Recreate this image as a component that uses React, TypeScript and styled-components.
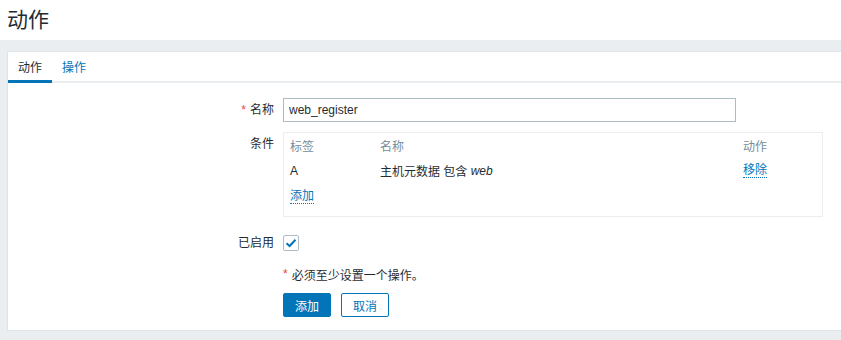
import React from "react";
import styled, { createGlobalStyle } from "styled-components";

const colors = {
  text: "#1f2c33",
  muted: "#768d99",
  blue: "#0275b8",
  bg: "#ebeef0",
  border: "#dfe4e7",
  inputBorder: "#acbbc4",
  red: "#e54545",
};

const GlobalStyle = createGlobalStyle`
  html, body {
    margin: 0;
    padding: 0;
    background: ${colors.bg};
    overflow: hidden;
  }
  body {
    font-family: "Liberation Sans", Arial, "Noto Sans CJK SC", sans-serif;
    font-size: 12px;
    color: ${colors.text};
  }
`;

const conditions = [{ label: "A", name: "主机元数据 包含", value: "web" }];

export default function App() {
  return (
    <>
      <GlobalStyle />
      <Header>
        <Title>动作</Title>
      </Header>
      <Main>
        <Panel>
          <TabBar>
            <Tab $active>动作</Tab>
            <Tab>操作</Tab>
          </TabBar>
          <Form>
            <Label>
              <Required>*</Required>名称
            </Label>
            <Field>
              <TextInput defaultValue="web_register" />
            </Field>

            <Label>条件</Label>
            <Field>
              <ConditionBox>
                <CondHead>标签</CondHead>
                <CondHead>名称</CondHead>
                <CondHead>动作</CondHead>
                {conditions.map((c) => (
                  <React.Fragment key={c.label}>
                    <CondCell>{c.label}</CondCell>
                    <CondCell>
                      {c.name} <em>{c.value}</em>
                    </CondCell>
                    <CondCell>
                      <Link>移除</Link>
                    </CondCell>
                  </React.Fragment>
                ))}
                <CondCell>
                  <Link>添加</Link>
                </CondCell>
              </ConditionBox>
            </Field>

            <Label $shift>已启用</Label>
            <Field $shift>
              <Checkbox>
                <svg width="12" height="10" viewBox="0 0 12 10">
                  <path
                    d="M1.5 5.2 L4.6 8 L10.5 1.8"
                    fill="none"
                    stroke={colors.blue}
                    strokeWidth="2"
                  />
                </svg>
              </Checkbox>
            </Field>

            <span />
            <Message>
              <Required>*</Required>必须至少设置一个操作。
            </Message>

            <span />
            <Buttons>
              <Button $primary>添加</Button>
              <Button>取消</Button>
            </Buttons>
          </Form>
        </Panel>
      </Main>
    </>
  );
}

//******** STYLES ********//
const Header = styled.header`
  height: 40px;
  background: #fff;
  display: flex;
  align-items: center;
  padding: 0 0 4px 7px;
  box-sizing: border-box;
`;

const Title = styled.h1`
  margin: 0;
  font-size: 21px;
  font-weight: normal;
  color: ${colors.text};
`;

const Main = styled.main`
  padding: 11px 0 9px 7px;
`;

const Panel = styled.section`
  background: #fff;
  border: 1px solid ${colors.border};
  margin-right: -4px;
  height: 280px;
  box-sizing: border-box;
`;

const TabBar = styled.div`
  display: flex;
  height: 29px;
  border-bottom: 2px solid ${colors.bg};
  box-sizing: content-box;
`;

const Tab = styled.div<{ $active?: boolean }>`
  display: flex;
  align-items: center;
  padding: 0 10px;
  color: ${(p) => (p.$active ? colors.text : colors.blue)};
  border-bottom: 3px solid ${(p) => (p.$active ? colors.blue : "transparent")};
  margin-bottom: -2px;
`;

const Form = styled.div`
  display: grid;
  grid-template-columns: 266px 1fr;
  column-gap: 9px;
  row-gap: 10px;
  padding-top: 15px;
`;

const Label = styled.div<{ $shift?: boolean }>`
  text-align: right;
  line-height: 24px;
  height: 24px;
  margin-top: ${(p) => (p.$shift ? "4px" : "0")};
  align-self: start;
`;

const Required = styled.span`
  color: ${colors.red};
  margin-right: 4px;
`;

const Field = styled.div<{ $shift?: boolean }>`
  display: flex;
  align-items: center;
  min-height: 24px;
  margin-top: ${(p) => (p.$shift ? "4px" : "0")};
`;

const TextInput = styled.input`
  width: 453px;
  height: 24px;
  box-sizing: border-box;
  border: 1px solid ${colors.inputBorder};
  padding: 0 5px;
  font: inherit;
  color: ${colors.text};
  outline: none;
`;

const ConditionBox = styled.div`
  width: 540px;
  box-sizing: border-box;
  border: 1px solid ${colors.bg};
  padding: 0 6px 6px;
  display: grid;
  grid-template-columns: 90px 1fr 73px;
  grid-template-rows: 25px 25px 27px;
`;

const CondHead = styled.div`
  color: ${colors.muted};
  display: flex;
  align-items: center;
`;

const CondCell = styled.div`
  display: flex;
  align-items: center;
  white-space: pre;

  em {
    font-style: italic;
  }
`;

const Link = styled.span`
  color: ${colors.blue};
  border-bottom: 1px dotted ${colors.blue};
  line-height: 14px;
  cursor: pointer;
`;

const Checkbox = styled.span`
  width: 16px;
  height: 16px;
  box-sizing: border-box;
  border: 1px solid ${colors.inputBorder};
  border-radius: 2px;
  display: flex;
  align-items: center;
  justify-content: center;
`;

const Message = styled.div`
  height: 18px;
  display: flex;
  align-items: center;
`;

const Buttons = styled.div`
  display: flex;
  gap: 10px;
`;

const Button = styled.button<{ $primary?: boolean }>`
  width: 48px;
  height: 24px;
  padding: 0;
  border-radius: 2px;
  border: 1px solid ${colors.blue};
  background: ${(p) => (p.$primary ? colors.blue : "#fff")};
  color: ${(p) => (p.$primary ? "#fff" : colors.blue)};
  font: inherit;
  cursor: pointer;
`;
